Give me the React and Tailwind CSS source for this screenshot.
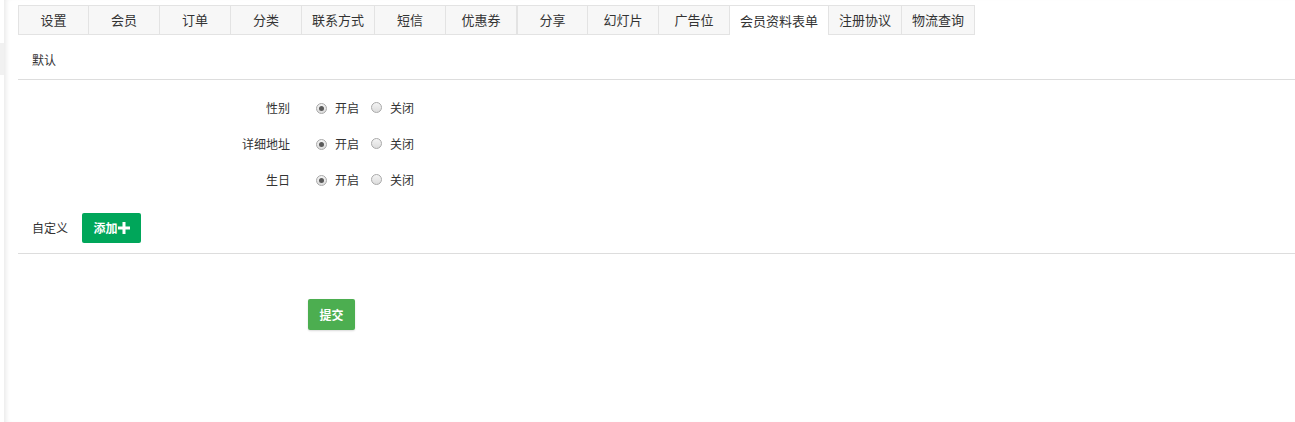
import React from "react";

const tabs = [
  "设置",
  "会员",
  "订单",
  "分类",
  "联系方式",
  "短信",
  "优惠券",
  "分享",
  "幻灯片",
  "广告位",
  "会员资料表单",
  "注册协议",
  "物流查询",
];

function Radio({ checked }) {
  return (
    <span className="relative inline-flex h-[11px] w-[11px] items-center justify-center rounded-full border border-[#a9a9a9] bg-gradient-to-b from-[#f4f4f4] to-[#dcdcdc]">
      {checked && <span className="h-[5px] w-[5px] rounded-full bg-[#5a5a5a]" />}
    </span>
  );
}

function Row({ label }) {
  return (
    <div className="flex h-[36px] items-center text-[12px] text-[#333]">
      <div className="w-[272px] text-right">{label}</div>
      <div className="ml-[26px] flex items-center">
        <Radio checked />
        <span className="ml-[8px]">开启</span>
        <span className="ml-[12px]">
          <Radio />
        </span>
        <span className="ml-[8px]">关闭</span>
      </div>
    </div>
  );
}

export default function App() {
  return (
    <div
      className="flex h-[422px] w-full bg-white"
      style={{ fontFamily: '"Noto Sans CJK SC", "Noto Sans", sans-serif' }}
    >
      <div className="w-[4px] shrink-0 bg-white">
        <div className="mt-[43px] h-[32px] bg-[#f1f1f1]" />
      </div>
      <div className="flex-1 bg-white pl-[14px] pt-[5px] shadow-[inset_5px_0_5px_-3px_rgba(0,0,0,0.09)]">
        <div className="flex h-[30px]">
          {tabs.map((t, i) => {
            const active = t === "会员资料表单";
            return (
              <div
                key={t}
                className={
                  "flex min-w-[71px] items-center justify-center border-t border-r border-[#e3e3e3] px-[10px] text-[13px] text-[#333] " +
                  (i === 0 || i === 7 ? "border-l " : "") +
                  (active ? "bg-white" : "border-b bg-[#f7f7f7]")
                }
              >
                {t}
              </div>
            );
          })}
        </div>
        <div className="flex h-[45px] items-center border-b border-[#dddddd] pl-[14px] pt-[6px] text-[12px] text-[#333]">
          默认
        </div>
        <div className="pt-[10px]">
          <Row label="性别" />
          <Row label="详细地址" />
          <Row label="生日" />
        </div>
        <div className="flex items-center border-b border-[#dddddd] pb-[10px] pl-[14px] pt-[15px] text-[12px] text-[#333]">
          <span>自定义</span>
          <button className="ml-[14px] flex h-[30px] w-[59px] items-center justify-center rounded-[2px] bg-[#00a65a] text-[12px] font-bold text-white">
            添加
            <svg width="12" height="12" viewBox="0 0 12 12">
              <path d="M4.5 0h3v4.5H12v3H7.5V12h-3V7.5H0v-3h4.5z" fill="white" />
            </svg>
          </button>
        </div>
        <div className="pl-[290px] pt-[45px]">
          <button className="flex h-[31px] w-[47px] items-center justify-center rounded-[2px] bg-[#4cae50] text-[12px] font-bold text-white shadow-[0_1px_2px_rgba(0,0,0,0.15)]">
            提交
          </button>
        </div>
      </div>
    </div>
  );
}
